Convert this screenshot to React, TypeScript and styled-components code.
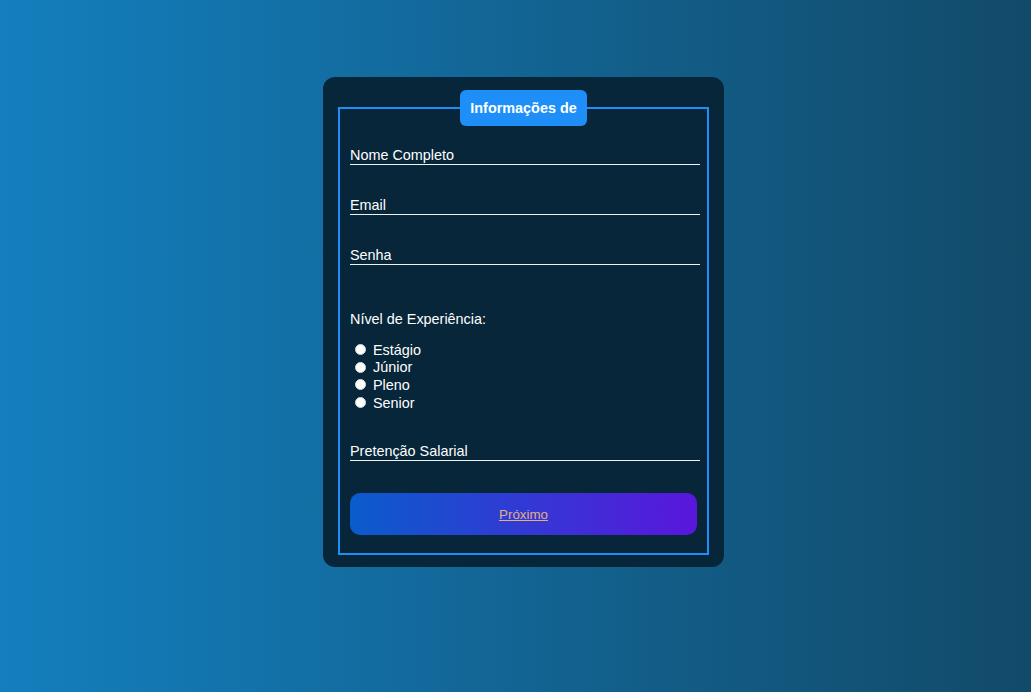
import styled, { createGlobalStyle } from 'styled-components'

const GlobalStyle = createGlobalStyle`
  html, body {
    margin: 0;
    padding: 0;
  }
  body {
    font-family: "Liberation Sans", Arial, sans-serif;
  }
`

const levels = ['Estágio', 'Júnior', 'Pleno', 'Senior']

export default function App() {
  return (
    <Page>
      <GlobalStyle />
      <Card>
        <Fieldset>
          <Legend>Informações de</Legend>
          <Field>Nome Completo</Field>
          <Field $top={31}>Email</Field>
          <Field $top={31}>Senha</Field>
          <GroupLabel>Nível de Experiência:</GroupLabel>
          <RadioList>
            {levels.map((level) => (
              <RadioRow key={level}>
                <Radio type="radio" name="nivel" value={level} />
                {level}
              </RadioRow>
            ))}
          </RadioList>
          <Field $top={31}>Pretenção Salarial</Field>
          <NextButton>
            <a href="#">Próximo</a>
          </NextButton>
        </Fieldset>
      </Card>
    </Page>
  )
}

const Page = styled.div`
  box-sizing: border-box;
  min-height: 692px;
  padding: 77px 0 0 16px;
  display: flex;
  justify-content: center;
  align-items: flex-start;
  background: linear-gradient(to right, #137fbe, #124a69);
`

const Card = styled.div`
  box-sizing: border-box;
  width: 401px;
  height: 490px;
  padding: 13px 15px;
  background: #07263a;
  border-radius: 12px;
`

const Fieldset = styled.fieldset`
  box-sizing: border-box;
  margin: 0;
  width: 371px;
  min-width: 0;
  height: 465px;
  padding: 10px 10px 0;
  border: 2px solid #1e8ff9;
  display: flex;
  flex-direction: column;
`

const Legend = styled.legend`
  margin: 0 auto;
  padding: 0 10px;
  height: 36px;
  line-height: 36px;
  background: #1e8ff9;
  border-radius: 6px;
  color: #fff;
  font-weight: bold;
  font-size: 14.4px;
`

const Field = styled.div<{ $top?: number }>`
  flex-shrink: 0;
  width: 350px;
  height: 18px;
  line-height: 18px;
  margin-top: ${(p) => p.$top ?? 10}px;
  border-bottom: 1px solid #f2f2f2;
  color: #fff;
  font-size: 14.4px;
`

const GroupLabel = styled.div`
  margin-top: 46px;
  height: 17px;
  line-height: 17px;
  color: #fff;
  font-size: 14.4px;
`

const RadioList = styled.div`
  margin-top: 13px;
  display: flex;
  flex-direction: column;
`

const RadioRow = styled.label`
  height: 17.6px;
  display: flex;
  align-items: center;
  gap: 7px;
  color: #fff;
  font-size: 14.4px;
`

const Radio = styled.input`
  appearance: none;
  margin: 0 0 0 5px;
  width: 11px;
  height: 11px;
  border-radius: 50%;
  background: #fff;
  border: 1px solid #d8d8d8;
  box-sizing: border-box;
`

const NextButton = styled.button`
  flex-shrink: 0;
  margin-top: 32px;
  height: 42px;
  width: 100%;
  border: none;
  border-radius: 10px;
  background: linear-gradient(to right, #0a5ccc, #5a16dc);
  font-family: "Liberation Sans", Arial, sans-serif;
  font-size: 13.33px;

  a {
    color: #e2b07e;
    text-decoration: underline;
  }
`
